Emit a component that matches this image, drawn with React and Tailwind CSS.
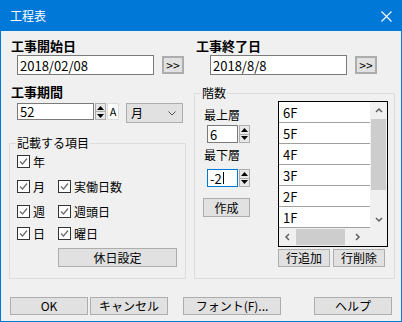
import React from "react";

const Btn = ({ children, className = "" }) => (
  <div className={`flex items-center justify-center bg-[#e1e1e1] border border-[#adadad] text-[12px] leading-none text-black ${className}`}>
    {children}
  </div>
);

const Check = () => (
  <span className="w-[13px] h-[13px] border border-[#333] bg-white flex items-center justify-center shrink-0">
    <svg width="11" height="11" viewBox="0 0 11 11">
      <path d="M2 5.5 L4.5 8 L9 2.5" stroke="#6b6b6b" strokeWidth="1.2" fill="none" />
    </svg>
  </span>
);

const Tri = ({ up }) => (
  <svg width="7" height="4" viewBox="0 0 7 4">
    <path d={up ? "M0 4 L3.5 0 L7 4 Z" : "M0 0 L7 0 L3.5 4 Z"} fill="#000" />
  </svg>
);

const Spin = ({ h = 17 }) => (
  <div className="flex flex-col w-[11px] ml-[1px]" style={{ height: h }}>
    <div className="flex-1 flex items-center justify-center border border-[#adadad] bg-[#e8e8e8]"><Tri up /></div>
    <div className="flex-1 flex items-center justify-center border border-[#adadad] border-t-0 bg-[#e8e8e8]"><Tri /></div>
  </div>
);

const Chev = ({ dir }) => {
  const d = {
    up: "M1 5 L4 2 L7 5",
    down: "M1 2 L4 5 L7 2",
    left: "M5 1 L2 4 L5 7",
    right: "M2 1 L5 4 L2 7",
  }[dir];
  return (
    <svg width="8" height="8" viewBox="0 0 8 8">
      <path d={d} stroke="#606060" strokeWidth="1.5" fill="none" />
    </svg>
  );
};

const Field = ({ children, className = "" }) => (
  <div className={`bg-white border border-[#7a7a7a] flex items-center pl-[2px] text-[13px] leading-none ${className}`}>
    {children}
  </div>
);

export default function App() {
  const floors = ["6F", "5F", "4F", "3F", "2F", "1F"];
  return (
    <div className="w-[402px] h-[322px] border border-[#0078d7] bg-[#f0f0f0] flex flex-col font-['Noto_Sans_CJK_JP',sans-serif] text-black overflow-hidden">
      {/* Title */}
      <div className="h-[30px] bg-[#0078d7] flex items-center pl-[9px] pr-[9px] shrink-0">
        <span className="text-white text-[12px] leading-none">工程表</span>
        <svg className="ml-auto" width="11" height="11" viewBox="0 0 11 11">
          <path d="M0.5 0.5 L10.5 10.5 M10.5 0.5 L0.5 10.5" stroke="#fff" strokeWidth="1.1" />
        </svg>
      </div>

      <div className="flex pl-[8px] pt-[7px] gap-[8px]">
        {/* Left column */}
        <div className="w-[177px] flex flex-col">
          <div className="ml-[2px] text-[13px] font-bold leading-[16px]">工事開始日</div>
          <div className="flex items-center mt-[1px] ml-[8px]">
            <Field className="w-[137px] h-[20px]">2018/02/08</Field>
            <Btn className="ml-[8px] w-[22px] h-[18px] border-2">&gt;&gt;</Btn>
          </div>
          <div className="ml-[2px] mt-[9px] text-[13px] font-bold leading-[16px]">工事期間</div>
          <div className="flex items-start mt-[3px] ml-[8px]">
            <Field className="w-[77px] h-[17px]">52</Field>
            <Spin h={17} />
            <div className="ml-[1px] w-[12px] h-[17px] bg-white border border-[#dcdcdc] flex items-center justify-center text-[11px] leading-none">A</div>
            <div className="ml-[7px] w-[57px] h-[20px] bg-[#e1e1e1] border border-[#adadad] flex items-center pl-[4px] pr-[6px] text-[12px] leading-none">
              <span>月</span>
              <svg className="ml-auto" width="8" height="5" viewBox="0 0 8 5">
                <path d="M0.5 0.5 L4 4 L7.5 0.5" stroke="#555" strokeWidth="1" fill="none" />
              </svg>
            </div>
          </div>
          <fieldset className="mt-[13px] h-[143px] border border-[#dcdcdc] text-[12px]">
            <legend className="ml-[6px] px-[1px] leading-[14px]">記載する項目</legend>
            <div className="flex flex-col pl-[7px]">
              <div className="flex items-center h-[13px] mt-[5px]">
                <Check /><span className="ml-[3px] leading-none">年</span>
              </div>
              {[["月", "実働日数"], ["週", "週頭日"], ["日", "曜日"]].map(([a, b], i) => (
                <div key={a} className={`flex items-center h-[13px] ${i === 2 ? "mt-[9px]" : "mt-[12px]"}`}>
                  <div className="w-[41px] flex items-center">
                    <Check /><span className="ml-[3px] leading-none">{a}</span>
                  </div>
                  <Check /><span className="ml-[3px] leading-none">{b}</span>
                </div>
              ))}
              <Btn className="ml-[41px] mt-[8px] w-[119px] h-[19px]">休日設定</Btn>
            </div>
          </fieldset>
        </div>

        {/* Right column */}
        <div className="w-[201px] flex flex-col">
          <div className="ml-[2px] text-[13px] font-bold leading-[16px]">工事終了日</div>
          <div className="flex items-center mt-[1px] ml-[16px]">
            <Field className="w-[137px] h-[20px]">2018/8/8</Field>
            <Btn className="ml-[8px] w-[22px] h-[18px] border-2">&gt;&gt;</Btn>
          </div>
          <fieldset className="mt-[11px] h-[193px] border border-[#dcdcdc] text-[12px]">
            <legend className="ml-[6px] px-[1px] leading-[14px]">階数</legend>
            <div className="flex pl-[8px]">
              <div className="w-[47px] flex flex-col">
                <div className="mt-[8px] ml-[1px] leading-[14px]">最上層</div>
                <div className="flex mt-[3px] ml-[4px]">
                  <Field className="w-[31px] h-[18px]">6</Field>
                  <Spin h={18} />
                </div>
                <div className="mt-[5px] ml-[1px] leading-[14px]">最下層</div>
                <div className="flex mt-[7px] ml-[4px]">
                  <Field className="w-[31px] h-[18px] !border-[#0078d7]">
                    -2<span className="w-px h-[12px] bg-black ml-px" />
                  </Field>
                  <Spin h={18} />
                </div>
                <Btn className="mt-[11px] w-[47px] h-[19px]">作成</Btn>
              </div>

              <div className="ml-[28px] flex flex-col">
                <div className="mt-[1px] w-[110px] h-[146px] border border-black bg-white flex flex-col">
                  <div className="flex">
                    <div className="w-[91px] flex flex-col">
                      {floors.map((f) => (
                        <div key={f} className="h-[21px] border-b border-[#a0a0a0] flex items-center pl-[4px] text-[13px] leading-none">
                          {f}
                        </div>
                      ))}
                    </div>
                    <div className="w-[17px] h-[126px] bg-[#f0f0f0] flex flex-col">
                      <div className="h-[17px] flex items-center justify-center"><Chev dir="up" /></div>
                      <div className="h-[71px] mx-[1px] bg-[#cdcdcd]" />
                      <div className="flex-1" />
                      <div className="h-[17px] flex items-center justify-center"><Chev dir="down" /></div>
                    </div>
                  </div>
                  <div className="flex h-[18px]">
                    <div className="w-[91px] flex bg-[#f0f0f0] items-stretch">
                      <div className="w-[17px] flex items-center justify-center"><Chev dir="left" /></div>
                      <div className="w-[49px] my-[1px] bg-[#cdcdcd]" />
                      <div className="flex-1 flex items-center justify-center"><Chev dir="right" /></div>
                    </div>
                    <div className="w-[17px] bg-[#f0f0f0]" />
                  </div>
                </div>
                <div className="flex mt-[2px] gap-[3px]">
                  <Btn className="w-[52px] h-[18px]">行追加</Btn>
                  <Btn className="w-[52px] h-[18px]">行削除</Btn>
                </div>
              </div>
            </div>
          </fieldset>
        </div>
      </div>

      {/* Bottom buttons */}
      <div className="flex pl-[9px] mt-[18px]">
        <Btn className="w-[78px] h-[18px]">OK</Btn>
        <Btn className="ml-[2px] w-[78px] h-[18px]">キャンセル</Btn>
        <Btn className="ml-[15px] w-[98px] h-[18px]">フォント(F)...</Btn>
        <Btn className="ml-[33px] w-[78px] h-[18px]">ヘルプ</Btn>
      </div>
    </div>
  );
}
